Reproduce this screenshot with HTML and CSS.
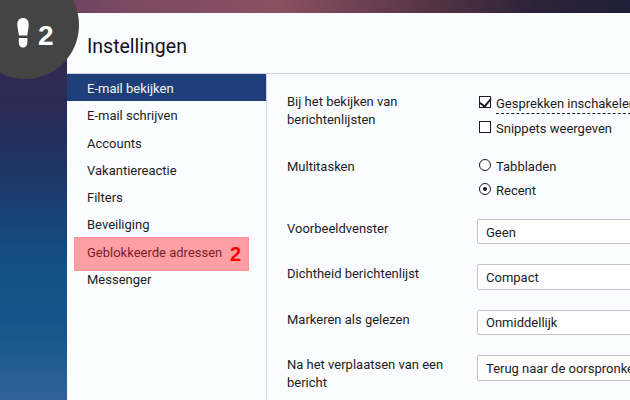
FILE: index.html
```html
<!DOCTYPE html>
<html lang="nl">
<head>
    <meta charset="UTF-8">
    <title>Instellingen</title>
    <link rel="stylesheet" href="styles.css">
</head>
<body>
    <div class="step-badge">
        <svg class="step-icon" width="12" height="30" viewBox="0 0 12 30">
            <path d="M6 0C9.5 0 11.7 2.5 11.7 6.5C11.7 10 10.6 13 10.3 17.6L1.9 17.6C1.5 13 .3 10 .3 6.5C.3 2.5 2.5 0 6 0Z" fill="#fff"/>
            <path d="M2 20L10.2 20C10.4 21 10.4 22 10.4 23.500C10.400 27.500 8.500 29.500 6 29.500C3.500 29.500 1.700 27.500 1.700 23.500C1.700 22 1.800 21 2 20Z" fill="#fff"/>
        </svg>
        <span class="step-number">2</span>
    </div>

    <div class="panel">
        <h1 class="panel-title">Instellingen</h1>
        <div class="panel-body">
            <ul class="nav">
                <li class="nav-item active">E-mail bekijken</li>
                <li class="nav-item">E-mail schrijven</li>
                <li class="nav-item">Accounts</li>
                <li class="nav-item">Vakantiereactie</li>
                <li class="nav-item">Filters</li>
                <li class="nav-item">Beveiliging</li>
                <li class="nav-item">Geblokkeerde adressen</li>
                <li class="nav-item">Messenger</li>
            </ul>
            <div class="nav-highlight"><span>2</span></div>

            <div class="settings">
                <div class="row">
                    <div class="row-label first">Bij het bekijken van berichtenlijsten</div>
                    <div class="row-control">
                        <label class="option"><input type="checkbox" checked><span class="dashed">Gesprekken inschakelen</span></label>
                        <label class="option"><input type="checkbox"><span>Snippets weergeven</span></label>
                    </div>
                </div>
                <div class="row row-radio">
                    <div class="row-label multitask">Multitasken</div>
                    <div class="row-control">
                        <label class="option"><input type="radio" name="multitask"><span>Tabbladen</span></label>
                        <label class="option"><input type="radio" name="multitask" checked><span>Recent</span></label>
                    </div>
                </div>
                <div class="row">
                    <div class="row-label">Voorbeeldvenster</div>
                    <div class="row-control"><select class="select"><option>Geen</option></select></div>
                </div>
                <div class="row">
                    <div class="row-label">Dichtheid berichtenlijst</div>
                    <div class="row-control"><select class="select"><option>Compact</option></select></div>
                </div>
                <div class="row">
                    <div class="row-label">Markeren als gelezen</div>
                    <div class="row-control"><select class="select"><option>Onmiddellijk</option></select></div>
                </div>
                <div class="row">
                    <div class="row-label">Na het verplaatsen van een bericht</div>
                    <div class="row-control"><select class="select"><option>Terug naar de oorspronkelijke map</option></select></div>
                </div>
            </div>
        </div>
    </div>
</body>
</html>
```

FILE: styles.css
```css
* {
    margin: 0;
    padding: 0;
    box-sizing: border-box;
}

html, body {
    height: 400px;
    overflow: hidden;
}

body {
    position: relative;
    padding: 13px 0 0 67px;
    font-family: Roboto, "Open Sans", sans-serif;
    font-size: 13px;
    line-height: 18px;
    color: #1c1c24;
    background:
        linear-gradient(90deg, #5c3c5e 0, #7c4a62 130px, #8a5062 280px, #553444 430px, #2a2238 540px, #20203a 630px) top / 100% 13px no-repeat,
        linear-gradient(180deg, #3a2b50 0, #2c2a55 100px, #1e3564 170px, #134f85 260px, #12558c 320px, #2f6299 400px);
}

.step-badge {
    position: absolute;
    left: -29px;
    top: -29px;
    width: 108px;
    height: 108px;
    border-radius: 50%;
    background: #444;
    z-index: 2;
}

.step-icon {
    position: absolute;
    left: 46px;
    top: 47px;
}

.step-number {
    position: absolute;
    left: 67px;
    top: 50px;
    font-family: "Liberation Sans", sans-serif;
    font-weight: bold;
    font-size: 28px;
    line-height: 30px;
    color: #fff;
}

.panel {
    width: 700px;
    height: 400px;
    background: #fbfcff;
}

.panel-title {
    height: 61px;
    padding: 20px 0 0 20px;
    font-size: 19.500px;
    font-weight: normal;
    line-height: 28px;
    color: #14141c;
    border-bottom: 1px solid #ccd3dc;
}

.panel-body {
    position: relative;
    display: flex;
    height: 330px;
}

.nav {
    width: 200px;
    flex: none;
    list-style: none;
    border-right: 1px solid #ccd3dc;
}

.nav-item {
    height: 27.300px;
    padding-left: 20px;
    line-height: 29px;
}

.nav-item.active {
    background: #1f3f7a;
    color: #f4f6fb;
}

.nav-highlight {
    position: absolute;
    left: 7px;
    top: 163px;
    width: 175px;
    height: 34px;
    display: flex;
    justify-content: flex-end;
    align-items: center;
    padding-right: 8px;
    background: rgba(255, 30, 40, 0.42);
    box-shadow: inset 0 0 0 1px rgba(255, 60, 60, 0.1);
}

.nav-highlight span {
    font-family: "Liberation Sans", sans-serif;
    font-weight: bold;
    font-size: 20px;
    color: #f00;
}

.settings {
    flex: 1;
    padding: 19px 0 0 20px;
}

.row {
    display: flex;
    margin-bottom: 20px;
}

.row-radio {
    margin-bottom: 21px;
}

.row-label {
    width: 190px;
    flex: none;
    padding: 1px 20px 0 0;
}

.row-label.first {
    padding-top: 0;
}

.multitask {
    margin-top: 1px;
}

.row-control {
    flex: 1;
}

.option {
    display: flex;
    align-items: center;
    gap: 5px;
    height: 18px;
    margin-bottom: 6.500px;
    padding-left: 2px;
    white-space: nowrap;
}

.option:last-child {
    margin-bottom: 0;
}

.option span {
    position: relative;
    top: 2px;
}

.option input {
    appearance: none;
    position: relative;
    flex: none;
    width: 12px;
    height: 12px;
    border: 1px solid #1c1c24;
    background: #fff;
}

.option input[type="radio"] {
    border-radius: 50%;
}

.option input[type="checkbox"]:checked::before {
    content: "";
    position: absolute;
    left: 2px;
    top: -1px;
    width: 5px;
    height: 9px;
    border: solid #1c1c24;
    border-width: 0 2px 2px 0;
    transform: rotate(40deg);
}

.option input[type="radio"]:checked::before {
    content: "";
    position: absolute;
    left: 3px;
    top: 3px;
    width: 4px;
    height: 4px;
    border-radius: 50%;
    background: #1c1c24;
}

.dashed {
    border-bottom: 1px dashed #1c1c24;
}

.select {
    appearance: none;
    display: block;
    width: 100%;
    height: 25.400px;
    padding: 2px 8px 0;
    font: inherit;
    color: inherit;
    background: #fff;
    border: 1px solid #c4c4c4;
    border-radius: 2px;
}
```
